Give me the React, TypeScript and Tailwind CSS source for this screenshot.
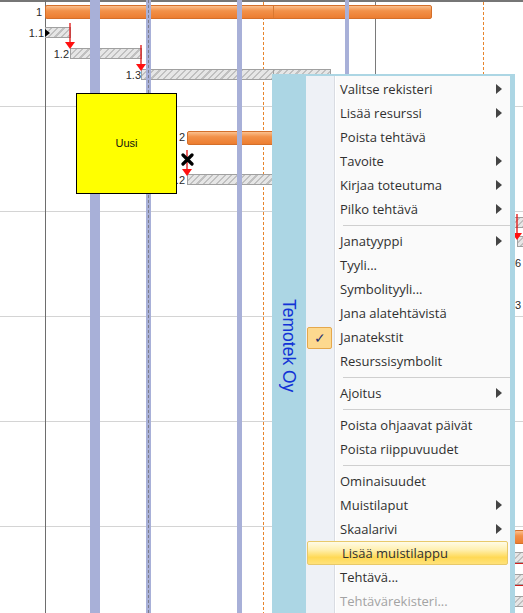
import React from "react";

// Gantt canvas + context menu (Temotek Oy)

const orange =
  "absolute h-[14px] rounded-[2px] border border-[#d46f2a] bg-[linear-gradient(to_bottom,#fbc08e_0%,#f29149_40%,#ec7d30_100%)]";
const hatch =
  "absolute h-[11px] border border-[#a0a0a0] bg-[repeating-linear-gradient(135deg,#e6e6e6_0px,#e6e6e6_3px,#c0c0c0_3px,#c0c0c0_4.5px)]";
const label = "absolute text-[11px] leading-none text-[#2a2a2a] text-right";
const dashOrange =
  "absolute top-[2px] h-full w-px bg-[repeating-linear-gradient(to_bottom,#e8842c_0px,#e8842c_3px,transparent_3px,transparent_5px)]";

function RedArrow({ className }: { className: string }) {
  return (
    <svg className={`absolute ${className}`} width="12" height="26" viewBox="0 0 12 26">
      <line x1="6" y1="0" x2="6" y2="20" stroke="#e01010" strokeWidth="1.3" />
      <polygon points="1,19 11,19 6,26" fill="#ff1010" />
    </svg>
  );
}

function SubArrow() {
  return (
    <svg width="6" height="10" viewBox="0 0 6 10" className="ml-auto mr-[8px]">
      <polygon points="0,0 6,5 0,10" fill="#444" />
    </svg>
  );
}

type Item = { t: string; sub?: boolean; sep?: boolean; checked?: boolean; hot?: boolean; off?: boolean };

const items: Item[] = [
  { t: "Valitse rekisteri", sub: true },
  { t: "Lisää resurssi", sub: true },
  { t: "Poista tehtävä" },
  { t: "Tavoite", sub: true },
  { t: "Kirjaa toteutuma", sub: true },
  { t: "Pilko tehtävä", sub: true },
  { t: "", sep: true },
  { t: "Janatyyppi", sub: true },
  { t: "Tyyli..." },
  { t: "Symbolityyli..." },
  { t: "Jana alatehtävistä" },
  { t: "Janatekstit", checked: true },
  { t: "Resurssisymbolit" },
  { t: "", sep: true },
  { t: "Ajoitus", sub: true },
  { t: "", sep: true },
  { t: "Poista ohjaavat päivät" },
  { t: "Poista riippuvuudet" },
  { t: "", sep: true },
  { t: "Ominaisuudet" },
  { t: "Muistilaput", sub: true },
  { t: "Skaalarivi", sub: true },
  { t: "Lisää muistilappu", hot: true },
  { t: "Tehtävä..." },
  { t: "Tehtävärekisteri...", off: true },
];

function ContextMenu() {
  return (
    <div className="absolute left-[272px] top-[74px] flex h-[545px] w-[243px] bg-[#acd6e4] pt-[2px] pr-[5px]">
      <div className="flex w-[34px] items-center justify-center pb-[4px]">
        <span className="text-[17.5px] text-[#1233d6] [writing-mode:vertical-rl]">Temotek Oy</span>
      </div>
      <div className="relative flex-1 bg-[linear-gradient(to_right,#eef1f6_0px,#eef1f6_28px,#d9dce2_28px,#d9dce2_29px,#ffffff_29px,#ffffff_30px,#fafafa_30px)] pt-[1px] font-['Open_Sans',sans-serif] text-[13px]">
        {items.map((it, i) =>
          it.sep ? (
            <div key={i} className="flex h-[8px] items-center pl-[37px]">
              <div className="h-px w-full bg-[#cfcfcf]" />
            </div>
          ) : (
            <div
              key={i}
              className={`relative flex h-[24px] items-center pl-[34px] ${
                it.hot
                  ? "mr-[2px] ml-[1px] rounded-[2px] border border-[#e8c96a] bg-[linear-gradient(to_bottom,#fffbe6_0%,#fff0b0_35%,#ffd955_70%,#ffe27a_100%)] pl-[33px]"
                  : ""
              } ${it.off ? "text-[#a3a3a3]" : "text-[#303030]"}`}
            >
              {it.checked && (
                <div className="absolute left-[1px] top-[2px] flex h-[22px] w-[25px] items-center justify-center rounded-[2px] border border-[#e5a84c] bg-[#fdd98f] text-[14px] leading-none text-[#1f2f70]">
                  ✓
                </div>
              )}
              <span className="leading-none">{it.t}</span>
              {it.sub && <SubArrow />}
            </div>
          )
        )}
      </div>
    </div>
  );
}

export default function App() {
  return (
    <div className="relative h-[613px] w-[523px] overflow-hidden bg-white font-['Liberation_Sans',Arial,sans-serif]">
      {/* horizontal grid rows */}
      <div className="flex flex-col">
        <div className="h-[2px] bg-[#767676]" />
        <div className="h-[105px] border-b border-[#d4d4d4]" />
        <div className="h-[105px] border-b border-[#d4d4d4]" />
        <div className="h-[105px] border-b border-[#d4d4d4]" />
        <div className="h-[105px] border-b border-[#d4d4d4]" />
        <div className="h-[105px] border-b border-[#d4d4d4]" />
      </div>

      {/* vertical lines */}
      <div className="absolute left-[45px] top-0 h-full w-px bg-[#6e6e6e]" />
      <div className="absolute left-[375px] top-0 h-full w-px bg-[#7a7a7a]" />
      <div className={`${dashOrange} left-[263px]`} />
      <div className={`${dashOrange} left-[483px]`} />

      {/* bars */}
      <div className={`${orange} left-[45px] top-[5px] w-[387px]`} />
      <div className="absolute left-[273px] top-[6px] h-[12px] w-px bg-[#d9782f]" />
      <div className={`${hatch} left-[45px] top-[27px] w-[26px]`} />
      <div className={`${hatch} left-[70px] top-[48px] w-[72px]`} />
      <div className={`${hatch} left-[141px] top-[69px] w-[190px]`} />
      <div className="absolute left-[273px] top-[70px] h-[9px] w-px bg-[#a0a0a0]" />
      <div className={`${orange} left-[187px] top-[131px] w-[100px]`} />
      <div className={`${hatch} left-[187px] top-[174px] w-[100px]`} />

      {/* labels */}
      <div className={`${label} left-[30px] top-[7px] w-[12px]`}>1</div>
      <div className={`${label} left-[20px] top-[28px] w-[24px]`}>1.1</div>
      <div className={`${label} left-[44px] top-[49px] w-[25px]`}>1.2</div>
      <div className={`${label} left-[116px] top-[70px] w-[25px]`}>1.3</div>
      <div className={`${label} left-[160px] top-[132px] w-[25px]`}>2</div>
      <div className={`${label} left-[160px] top-[175px] w-[25px]`}>2.2</div>
      <svg className="absolute left-[45px] top-[29px]" width="5" height="8" viewBox="0 0 5 8">
        <polygon points="0,0 5,4 0,8" fill="#000" />
      </svg>

      <RedArrow className="left-[64px] top-[23px]" />
      <RedArrow className="left-[135px] top-[45px]" />
      <RedArrow className="left-[181px] top-[150px]" />

      {/* non-working day bands */}
      <div className="absolute left-[90px] top-0 h-full w-[10px] bg-[#a8b0d8]" />
      <div className="absolute left-[146px] top-0 h-full w-[5px] bg-[#a8b0d8]" />
      <div className="absolute left-[148px] top-0 h-full border-l border-dashed border-[#7d7d8c]" />
      <div className="absolute left-[237px] top-0 h-full w-[5px] bg-[#a8b0d8]" />
      <div className="absolute left-[345px] top-0 h-full w-[4px] bg-[#a8b0d8]" />

      {/* delete mark */}
      <svg className="absolute left-[181px] top-[153px]" width="13" height="13" viewBox="0 0 13 13">
        <path d="M2 2 L11 11 M11 2 L2 11" stroke="#000" strokeWidth="3.2" strokeLinecap="round" />
      </svg>

      {/* note */}
      <div className="absolute left-[76px] top-[93px] flex h-[101px] w-[101px] items-center justify-center border border-black bg-[#ffff00] text-[11px] text-[#111]">
        Uusi
      </div>

      {/* right edge beyond menu */}
      <div className={`${hatch} left-[513px] top-[217px] w-[20px]`} />
      <div className={`${hatch} left-[517px] top-[236px] w-[20px]`} />
      <RedArrow className="left-[511px] top-[214px]" />
      <div className={`${label} left-[515px] top-[258px]`}>6</div>
      <div className={`${label} left-[515px] top-[300px]`}>3</div>
      <div className={`${orange} left-[514px] top-[530px] w-[20px]`} />
      <div className={`${hatch} left-[514px] top-[552px] w-[20px]`} />
      <div className="absolute left-[514px] top-[563px] h-px w-[10px] bg-[#d02020]" />
      <div className={`${hatch} left-[514px] top-[574px] w-[20px]`} />
      <div className="absolute left-[514px] top-[585px] h-px w-[10px] bg-[#d02020]" />
      <div className={`${hatch} left-[514px] top-[596px] w-[20px]`} />

      <ContextMenu />
    </div>
  );
}
